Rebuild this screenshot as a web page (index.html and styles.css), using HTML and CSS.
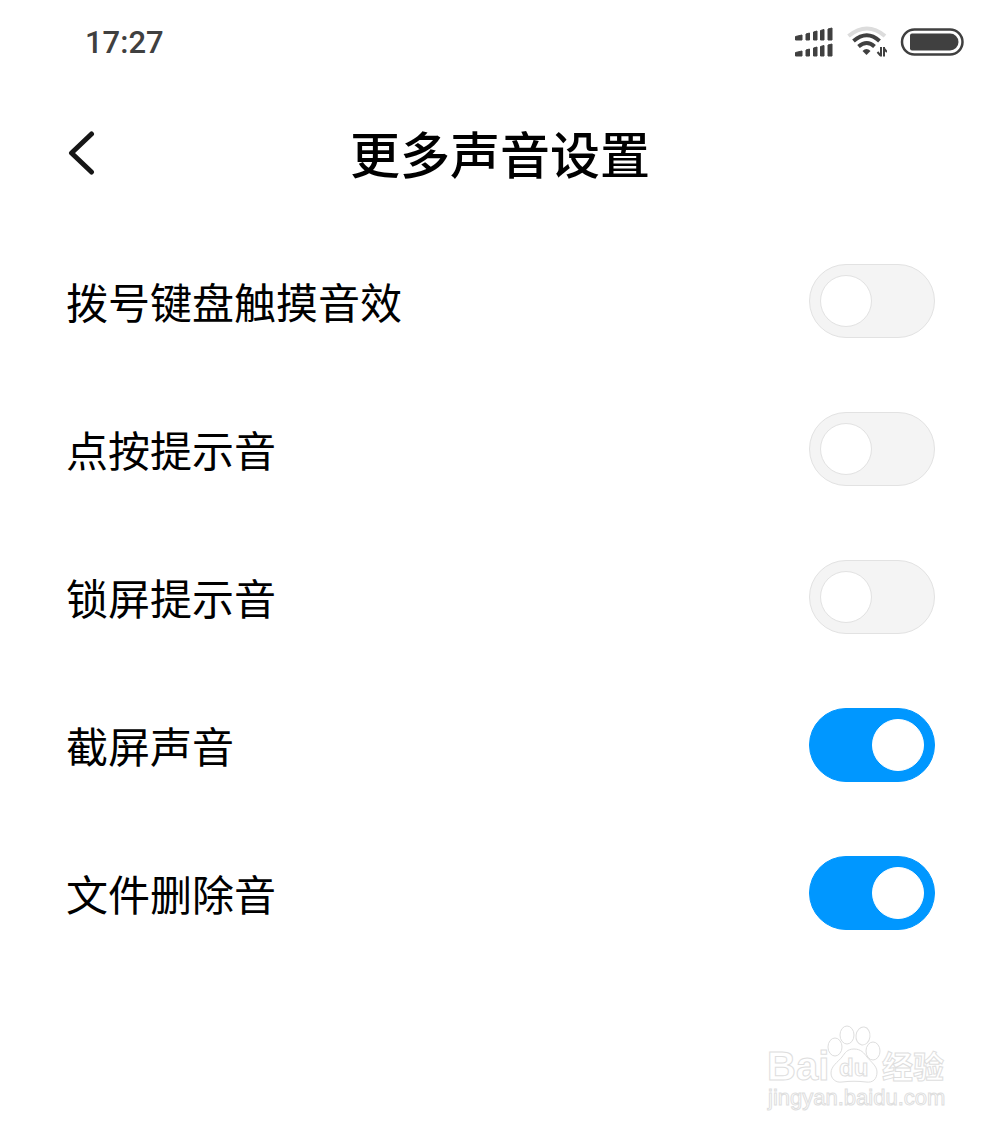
FILE: index.html
```html
<!DOCTYPE html>
<html lang="zh-CN">
<head>
  <meta charset="UTF-8" />
  <meta name="viewport" content="width=device-width, initial-scale=1.0"/>
  <title>更多声音设置</title>
  <link rel="stylesheet" href="styles.css">
</head>
<body>

  <div class="status-bar">
    <span class="hora">17:27</span>
    <div class="status-icons">
      <svg class="icon-signal" width="40" height="32" viewBox="0 0 40 32" fill="#404040" stroke="#404040" stroke-linejoin="round">
        <path d="M1.500 10.500l6.500-1.500v5H1.500zM12 8l3.500-1v7H12zM19.500 6l3.500-1v9h-3.500zM26.500 4.500l3.500-1V14h-3.500zM34 3l4-1v12h-4z"/>
        <path d="M1.500 26.500l6.500-1.500v5H1.500zM12 24l3.500-1v7H12zM19.500 22l3.500-1v9h-3.500zM26.500 20.500l3.500-1V30h-3.500zM34 19l4-1v12h-4z"/>
      </svg>
      <svg class="icon-wifi" width="40" height="32" viewBox="0 0 40 32" fill="none" stroke="#404040" stroke-width="4">
        <path stroke="#dcdcdc" d="M1.500 10Q20-5 38 10"/>
        <path d="M6.500 15Q20 3.500 32.500 15"/>
        <path d="M11.500 20.500Q20 13.500 27.500 20.500"/>
        <path stroke="none" fill="#404040" d="M15.500 25Q19.500 21 23.500 25L19.500 29z"/>
        <path stroke-width="2" d="M34 21V30.500M30.500 26l3 3.500M37 30.500V21M40 26l-3-3.500"/>
      </svg>
      <svg class="icon-battery" width="64" height="28" viewBox="0 0 64 28">
        <rect x="2" y="1.500" width="60.500" height="25" rx="12.500" fill="none" stroke="#404040" stroke-width="2.500"/>
        <path fill="#404040" d="M12 5.500h38a8.500 8.500 0 0 1 0 17H12a2 2 0 0 1-2-2v-13a2 2 0 0 1 2-2z"/>
      </svg>
    </div>
  </div>

  <header class="header">
    <a href="#" class="back" aria-label="返回">
      <svg width="30" height="48" viewBox="0 0 30 48" fill="none" stroke="#161616" stroke-width="5" stroke-linecap="round" stroke-linejoin="round">
        <path d="M26.500 6L6.500 25l20 19"/>
      </svg>
    </a>
    <h1>更多声音设置</h1>
  </header>

  <main class="ajustes">
    <div class="ajuste">
      <label for="dial">拨号键盘触摸音效</label>
      <input type="checkbox" class="switch" id="dial">
    </div>
    <div class="ajuste">
      <label for="touch">点按提示音</label>
      <input type="checkbox" class="switch" id="touch">
    </div>
    <div class="ajuste">
      <label for="lock">锁屏提示音</label>
      <input type="checkbox" class="switch" id="lock">
    </div>
    <div class="ajuste">
      <label for="screenshot">截屏声音</label>
      <input type="checkbox" class="switch" id="screenshot" checked>
    </div>
    <div class="ajuste">
      <label for="delete">文件删除音</label>
      <input type="checkbox" class="switch" id="delete" checked>
    </div>
  </main>

  <footer class="marca">
    <svg width="184" height="92" viewBox="0 0 184 92">
      <g class="marca-huella">
        <ellipse cx="71" cy="23" rx="7" ry="9"/>
        <ellipse cx="83" cy="11" rx="7" ry="9"/>
        <ellipse cx="99" cy="12" rx="7" ry="9" transform="rotate(8 99 12)"/>
        <ellipse cx="109" cy="27" rx="7" ry="9"/>
        <path d="M90 25c-7 0-9 4-12 8-4 5-11 9-11 16 0 6 5 10 11 9 8-1 16-1 24 0 7 1 11-3 11-10 0-6-6-10-10-15-3-4-6-8-13-8z"/>
      </g>
      <text class="marca-logo" x="3" y="56">Bai</text>
      <text class="marca-du" x="75" y="52">du</text>
      <text class="marca-cn" x="118" y="54">经验</text>
      <text class="marca-url" x="4" y="81">jingyan.baidu.com</text>
    </svg>
  </footer>

</body>
</html>
```
FILE: styles.css
```css
* {
  box-sizing: border-box;
  margin: 0;
  padding: 0;
}
body {
  font-family: 'Noto Sans CJK SC', sans-serif;
  background: #fff;
  color: #000;
  min-height: 100vh;
  display: flex;
  flex-direction: column;
}

/* Status bar */
.status-bar {
  display: flex;
  align-items: center;
  justify-content: space-between;
  height: 80px;
  padding: 4px 36px 0 85px;
}

.hora {
  font-family: Roboto, sans-serif;
  font-size: 31px;
  font-weight: 500;
  color: #404040;
}

.status-icons {
  display: flex;
  align-items: center;
  gap: 13px;
}

/* Header */
.header {
  display: grid;
  grid-template-columns: 1fr auto 1fr;
  align-items: center;
  height: 147px;
  padding: 0 65px 4px;
}

.back {
  display: flex;
}

.header h1 {
  font-size: 50px;
  font-weight: 500;
  line-height: 50px;
}

/* Settings */
.ajuste {
  display: flex;
  align-items: center;
  justify-content: space-between;
  height: 148px;
  padding: 0 65px 0 66px;
}

.ajuste label {
  font-size: 42px;
  line-height: 60px;
}

.switch {
  appearance: none;
  display: flex;
  align-items: center;
  width: 126px;
  height: 74px;
  padding: 0 10px;
  border: 1px solid #e2e2e2;
  border-radius: 37px;
  background: #f4f4f4;
  cursor: pointer;
}

.switch::before {
  content: "";
  box-sizing: border-box;
  width: 52px;
  height: 52px;
  border: 1px solid #e2e2e2;
  border-radius: 50%;
  background: #fff;
}

.switch:checked {
  justify-content: flex-end;
  background: #0097ff;
  border-color: #0097ff;
}

.switch:checked::before {
  border-color: #fff;
}

/* Watermark */
.marca {
  display: flex;
  justify-content: flex-end;
  margin-top: auto;
  padding: 0 52px 16px 0;
}

.marca text,
.marca-huella {
  fill: #fff;
  stroke: #dedede;
  stroke-width: 1px;
}

.marca-logo {
  font: bold 40px 'Liberation Sans', sans-serif;
}

.marca-du {
  font: bold 24px 'Liberation Sans', sans-serif;
}

.marca-cn {
  font: bold 31px 'Noto Sans CJK SC', sans-serif;
}

.marca-url {
  font: 22px 'Liberation Sans', sans-serif;
}
```
